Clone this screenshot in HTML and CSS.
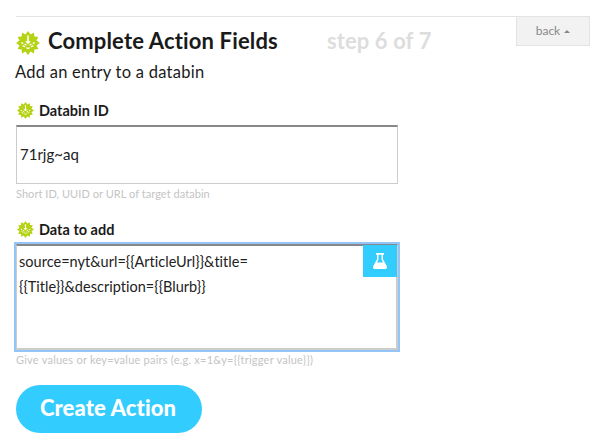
FILE: index.html
```html
<!DOCTYPE html>
<html lang="en">
<head>
    <meta charset="UTF-8">
    <meta name="viewport" content="width=device-width, initial-scale=1.0">
    <title>Complete Action Fields</title>
    <link rel="stylesheet" href="styles.css">
</head>
<body>
    <svg class="sprite" width="0" height="0">
        <symbol id="databin" viewBox="0 0 24 24">
            <path fill="#b5d214" d="M12 0l2.500 3.500L18 1.600l.4 4 4 .4L20.500 9.500l3.500 2.500-3.500 2.500 1.900 3.500-4 .4-.4 4-3.500-1.900L12 24l-2.500-3.500L6 22.400l-.4-4-4-.4 1.900-3.500L0 12l3.500-2.500L1.600 6l4-.4.4-4 3.500 1.900z"/>
            <path fill="#fff" d="M11.200 4.500h1.600v5.700h2.200l-3 3-3-3h2.200z"/>
            <path fill="none" stroke="#fff" stroke-width="1.300" stroke-linecap="round" d="M5.800 11.800l1 .5M9 13.400l1 .5M14 13.900l1-.5M17.200 12.300l1-.5M7 14.800l1.500.8M10.800 16.900l1.200.6 1.200-.6M15.500 15.600l1.500-.8"/>
        </symbol>
    </svg>

    <div class="step">
        <header>
            <svg class="icon-large"><use href="#databin"/></svg>
            <h1>Complete Action Fields</h1>
            <span class="step-count">step 6 of 7</span>
            <button class="back-btn" type="button">back <span class="caret"></span></button>
        </header>
        <p class="subtitle">Add an entry to a databin</p>

        <form>
            <label for="databin-id"><svg class="icon-small"><use href="#databin"/></svg>Databin ID</label>
            <input class="field" id="databin-id" type="text" value="71rjg~aq">
            <p class="help">Short ID, UUID or URL of target databin</p>

            <label class="data-label" for="data"><svg class="icon-small"><use href="#databin"/></svg>Data to add</label>
            <div class="data-box">
                <textarea class="field focused" id="data" spellcheck="false">source=nyt&amp;url={{ArticleUrl}}&amp;title=
{{Title}}&amp;description={{Blurb}}</textarea>
                <button class="flask-btn" type="button" aria-label="Insert fields">
                    <svg width="14" height="16" viewBox="0 0 14 16">
                        <path fill="#fff" fill-rule="evenodd" d="M3 0h8v1.800h-1v4.400l3.600 6.500c.9 1.700.2 3.300-1.600 3.300H2c-1.800 0-2.500-1.600-1.600-3.300L4 6.200V1.800H3zM5.500 1.800v4.800L4 9.500h6L8.500 6.600V1.800z"/>
                    </svg>
                </button>
            </div>
            <p class="help help-data">Give values or key=value pairs (e.g. x=1&amp;y={{trigger value}})</p>

            <button class="create-btn" type="button">Create Action</button>
        </form>
    </div>
</body>
</html>
```

FILE: styles.css
```css
* {
    box-sizing: border-box;
    font-variant-ligatures: none;
}

body {
    margin: 0;
    background: #fff;
    color: #1a1a1a;
    font-family: Lato, sans-serif;
    overflow: hidden;
}

.sprite {
    display: block;
}

.step {
    margin: 16px 10px 0 16px;
}

header {
    display: flex;
    align-items: flex-start;
    height: 44px;
    border-top: 1px solid #e3e3e3;
}

.icon-large {
    width: 24px;
    height: 24px;
    margin-top: 14px;
}

h1 {
    margin: 8px 0 0 8px;
    width: 279px;
    font-size: 22px;
    line-height: 32px;
    font-weight: bold;
    letter-spacing: 0.15px;
    white-space: nowrap;
}

.step-count {
    margin-top: 8px;
    color: #ddd;
    font-size: 22px;
    line-height: 32px;
    font-weight: bold;
    letter-spacing: 0.1px;
}

.back-btn {
    width: 74px;
    height: 30px;
    margin: -1px 0 0 auto;
    padding: 0 0 2px;
    border: 1px solid #e3e3e3;
    background: #f2f2f2;
    color: #888;
    font: 12px Lato, sans-serif;
}

.caret {
    display: inline-block;
    margin-left: 1px;
    border: 3px solid transparent;
    border-top: 0;
    border-bottom: 3px solid #888;
    vertical-align: 2px;
}

.subtitle {
    margin: 0 0 0 -1px;
    font-size: 16.5px;
    line-height: 24px;
    letter-spacing: 0.25px;
}

label {
    display: flex;
    align-items: center;
    height: 20px;
    margin-top: 16px;
    font-size: 14.5px;
    font-weight: bold;
}

.icon-small {
    width: 17px;
    height: 17px;
    margin: 0 5px 0 1px;
}

.field {
    display: block;
    width: 382px;
    height: 59px;
    margin: 5px 0 0;
    padding: 0 3px 2px;
    border: 1px solid #ccc;
    border-top: 2px solid #888;
    border-radius: 0;
    outline: none;
    background: #fff;
    color: #222;
    font: 15px Lato, sans-serif;
}

.help {
    margin: 0;
    color: #c4c4c4;
    font-size: 11px;
    line-height: 20px;
    letter-spacing: 0.05px;
}

.help-data {
    letter-spacing: 0.23px;
}

.data-label {
    margin-top: 15px;
}

.data-box {
    position: relative;
    width: 382px;
}

textarea.focused {
    height: 106px;
    padding: 3px 2px;
    border-right-width: 2px;
    border-bottom-width: 2px;
    font-size: 14.5px;
    line-height: 25px;
    letter-spacing: 0.02px;
    resize: none;
    box-shadow: 0 0 0 2px #94c5f9;
}

.flask-btn {
    position: absolute;
    top: 1px;
    right: 1px;
    display: flex;
    align-items: center;
    justify-content: center;
    width: 34px;
    height: 32px;
    padding: 0;
    border: 0;
    background: #3cf;
}

.create-btn {
    display: block;
    width: 186px;
    height: 48px;
    margin-top: 15px;
    padding: 0 2px 3px 0;
    border: 0;
    border-radius: 24px;
    background: #3cf;
    color: #fff;
    font: 900 22px Lato, sans-serif;
    letter-spacing: 0.1px;
}
```
